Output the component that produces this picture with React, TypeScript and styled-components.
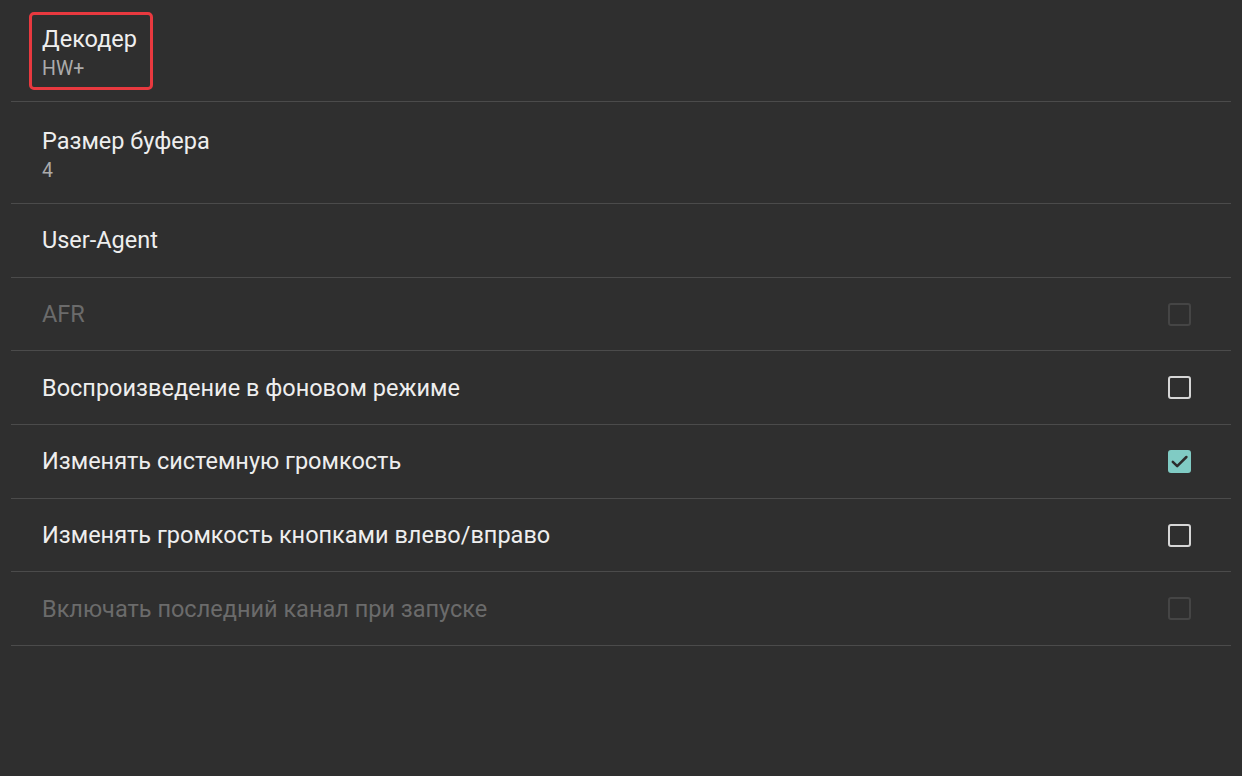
import React from "react";
import styled, { createGlobalStyle, css } from "styled-components";

const Global = createGlobalStyle`
  html, body {
    margin: 0;
    padding: 0;
    background: #2f2f2f;
    height: 100%;
  }
  body {
    font-family: Roboto, "Noto Sans", "Liberation Sans", sans-serif;
    -webkit-font-smoothing: antialiased;
  }
`;

const Screen = styled.div`
  width: 1242px;
  height: 776px;
  background: #2f2f2f;
  overflow: hidden;
`;

const List = styled.ul`
  list-style: none;
  margin: 0 11px;
  padding: 0;
`;

const Row = styled.li<{ $tall?: boolean }>`
  display: flex;
  align-items: ${(p) => (p.$tall ? "flex-start" : "center")};
  justify-content: space-between;
  height: ${(p) => (p.$tall ? "102px" : "73.7px")};
  box-sizing: border-box;
  padding: ${(p) => (p.$tall ? "25px 40px 0 31px" : "0 40px 0 31px")};
  border-bottom: 1px solid #4b4b4b;
`;

const TextBlock = styled.div<{ $focused?: boolean }>`
  position: relative;
  display: flex;
  flex-direction: column;
  gap: 4px;
  ${(p) =>
    p.$focused &&
    css`
      &::after {
        content: "";
        position: absolute;
        left: -13px;
        top: -13px;
        width: 124px;
        height: 78px;
        box-sizing: border-box;
        border: 3px solid #e8393f;
        border-radius: 5px;
      }
    `}
`;

const Title = styled.div<{ $disabled?: boolean }>`
  font-size: 23.5px;
  line-height: 28px;
  color: ${(p) => (p.$disabled ? "#6b6b6b" : "#eeeeee")};
`;

const Summary = styled.div`
  font-size: 19.5px;
  line-height: 24px;
  color: #ababab;
`;

const Box = styled.span<{ $checked?: boolean; $disabled?: boolean }>`
  display: inline-flex;
  align-items: center;
  justify-content: center;
  width: 23px;
  height: 23px;
  box-sizing: border-box;
  border-radius: 3px;
  border: ${(p) =>
    p.$checked ? "none" : `2px solid ${p.$disabled ? "#454545" : "#d6d6d6"}`};
  background: ${(p) => (p.$checked ? "#80cbc4" : "transparent")};
`;

const Check: React.FC<{ checked?: boolean; disabled?: boolean }> = ({
  checked,
  disabled,
}) => (
  <Box $checked={checked} $disabled={disabled}>
    {checked && (
      <svg width="23" height="23" viewBox="0 0 24 24">
        <path
          d="M5 12.3l4.6 4.6L19.2 7.3"
          fill="none"
          stroke="#2c2c2c"
          strokeWidth="2.6"
          strokeLinecap="round"
          strokeLinejoin="round"
        />
      </svg>
    )}
  </Box>
);

type Item = {
  title: string;
  summary?: string;
  focused?: boolean;
  disabled?: boolean;
  checkbox?: boolean;
  checked?: boolean;
};

const items: Item[] = [
  { title: "Декодер", summary: "HW+", focused: true },
  { title: "Размер буфера", summary: "4" },
  { title: "User-Agent" },
  { title: "AFR", disabled: true, checkbox: true },
  { title: "Воспроизведение в фоновом режиме", checkbox: true },
  { title: "Изменять системную громкость", checkbox: true, checked: true },
  { title: "Изменять громкость кнопками влево/вправо", checkbox: true },
  { title: "Включать последний канал при запуске", disabled: true, checkbox: true },
];

export default function App() {
  return (
    <Screen>
      <Global />
      <List>
        {items.map((it) => (
          <Row key={it.title} $tall={!!it.summary}>
            <TextBlock $focused={it.focused}>
              <Title $disabled={it.disabled}>{it.title}</Title>
              {it.summary && <Summary>{it.summary}</Summary>}
            </TextBlock>
            {it.checkbox && <Check checked={it.checked} disabled={it.disabled} />}
          </Row>
        ))}
      </List>
    </Screen>
  );
}
